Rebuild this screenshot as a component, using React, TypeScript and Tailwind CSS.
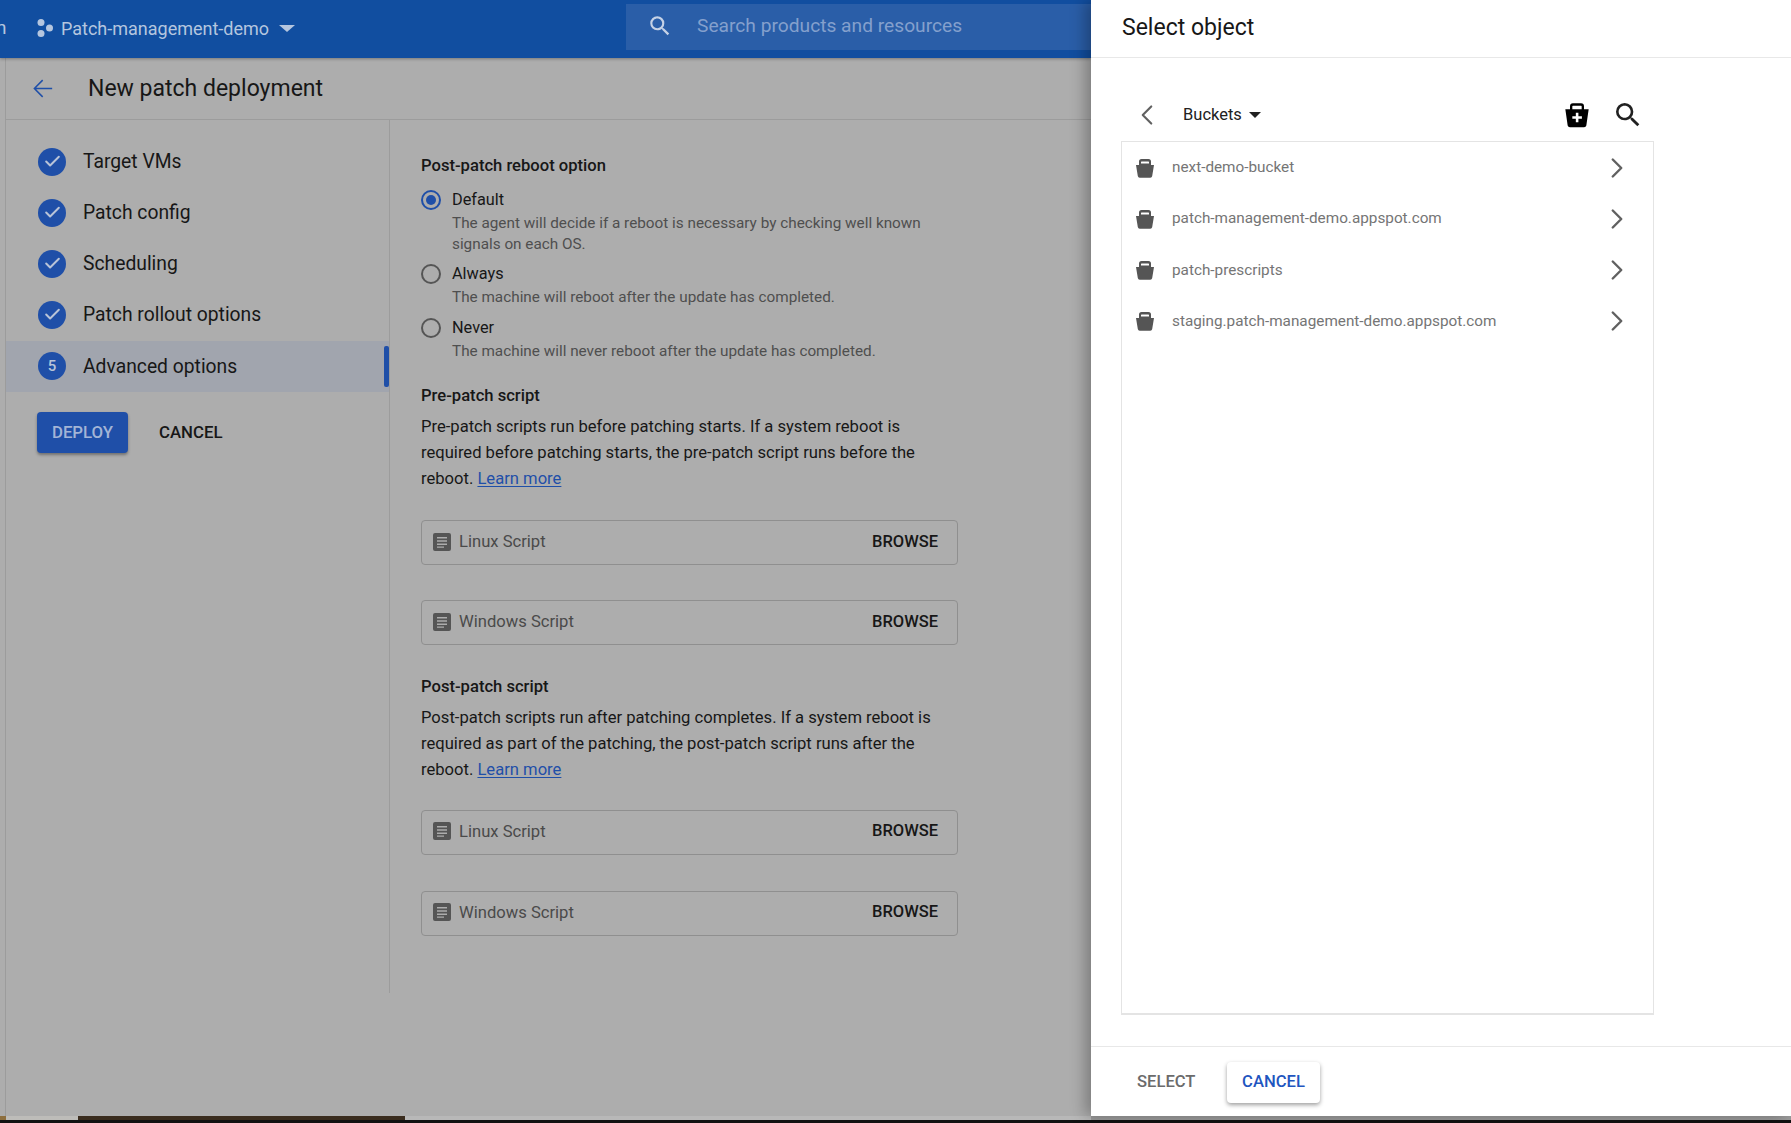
import { Check, ChevronLeft, ChevronRight } from "lucide-react";

const steps = ["Target VMs", "Patch config", "Scheduling", "Patch rollout options"];
const buckets = [
  "next-demo-bucket",
  "patch-management-demo.appspot.com",
  "patch-prescripts",
  "staging.patch-management-demo.appspot.com",
];

const SearchIcon = ({ className }: { className?: string }) => (
  <svg viewBox="0 0 24 24" className={className} fill="currentColor">
    <path d="M15.500 14h-.79l-.28-.27A6.471 6.471 0 0 0 16 9.500 6.500 6.500 0 1 0 9.500 16c1.610 0 3.090-.59 4.230-1.570l.27.28v.79l5 4.990L20.490 19l-4.990-5zm-6 0C7.010 14 5 11.990 5 9.500S7.010 5 9.500 5 14 7.010 14 9.500 11.990 14 9.500 14z" />
  </svg>
);

const BucketIcon = ({ className }: { className?: string }) => (
  <svg viewBox="0 0 24 24" className={className} fill="currentColor">
    <path fillRule="evenodd" d="M6 9V5.500A2.500 2.500 0 0 1 8.500 3h7A2.500 2.500 0 0 1 18 5.500V9h3l-1.800 11a2 2 0 0 1-2 1.700H6.800a2 2 0 0 1-2-1.700L3 9h3zm2-3v1.500h8V6a.6.6 0 0 0-.6-.6H8.600A.6.6 0 0 0 8 6z" />
  </svg>
);

const AddBucketIcon = () => (
  <svg viewBox="0 0 24 24" className="w-[28px] h-[28px] text-black" fill="currentColor">
    <path fillRule="evenodd" d="M6 7V4.500A2.500 2.500 0 0 1 8.500 2h7A2.500 2.500 0 0 1 18 4.500V7h4l-2 14a2 2 0 0 1-2 1.500H6A2 2 0 0 1 4 21L2 7h4zm2-2.500V7h8V4.500a.5.5 0 0 0-.5-.5h-7a.5.5 0 0 0-.5.5zM11 10v3H8v2.200h3v3h2.200v-3h3V13h-3v-3H11z" />
  </svg>
);

const DocIcon = () => (
  <svg viewBox="0 0 18 18" className="w-[18px] h-[18px] text-[#555555] -mt-[2px]" fill="currentColor">
    <path fillRule="evenodd" d="M2 0h14a2 2 0 0 1 2 2v14a2 2 0 0 1-2 2H2a2 2 0 0 1-2-2V2a2 2 0 0 1 2-2zm2 4v1.500h10V4H4zm0 3.200v1.500h10V7.200H4zm0 3.200v1.500h10v-1.500H4zm0 3.100v1.200h7v-1.200H4z" />
  </svg>
);

const ScriptField = ({ label }: { label: string }) => (
  <div className="h-[45px] rounded-[4px] border border-[#8f8f8f] flex items-center pl-[11px] pr-[19px]">
    <DocIcon />
    <span className="ml-[8px] text-[16.600px] text-[#4a4a4a]">{label}</span>
    <span className="ml-auto text-[16.500px] font-medium text-[#171717] -mt-[1px]">BROWSE</span>
  </div>
);

const RebootOption = ({
  label,
  selected,
  children,
}: {
  label: string;
  selected?: boolean;
  children: React.ReactNode;
}) => (
  <div className="flex">
    <div
      className={`mt-[2px] w-[20px] h-[20px] rounded-full border-2 flex items-center justify-center shrink-0 ${
        selected ? "border-[#1f4fa8]" : "border-[#555555]"
      }`}
    >
      {selected && <div className="w-[10px] h-[10px] rounded-full bg-[#1f4fa8]" />}
    </div>
    <div className="ml-[11px]">
      <div className="text-[16.300px] leading-[24px] text-[#171717]">{label}</div>
      <div className="text-[15.300px] leading-[20.500px] text-[#4f4f4f] mt-[1px]">{children}</div>
    </div>
  </div>
);

export default function App() {
  return (
    <div
      className="w-[1791px] h-[1123px] overflow-hidden flex flex-col bg-[#adadad]"
      style={{ fontFamily: "Roboto, 'Liberation Sans', sans-serif" }}
    >
      <div className="flex flex-1 min-h-0">
        {/* Page behind the scrim */}
        <div className="w-[1091px] flex flex-col shrink-0">
          {/* Top bar */}
          <div className="h-[58px] bg-[#114ea0] flex shrink-0 shadow-[0_1px_3px_rgba(0,0,0,0.3)] relative text-[#b5c6df]">
            <span className="w-[10px] text-[19px] leading-[56px] -ml-[4px] mr-[29px]">n</span>
            <div className="flex items-center w-[591px] h-[56px]">
              <svg viewBox="0 0 20 20" className="w-[20px] h-[20px]" fill="currentColor">
                <circle cx="6" cy="4.500" r="3.500" />
                <circle cx="6" cy="15.500" r="3.500" />
                <circle cx="14.500" cy="10" r="3.500" />
              </svg>
              <span className="ml-[6px] text-[18px]">Patch-management-demo</span>
              <span className="ml-[10px] w-0 h-0 border-x-[8px] border-x-transparent border-t-[7px] border-t-[#b5c6df]" />
            </div>
            <div className="w-[465px] h-[46px] mt-[4px] bg-[#2a5ea8] flex items-center pl-[21px] pb-[2px]">
              <SearchIcon className="w-[26px] h-[26px] text-[#c5d2e6]" />
              <span className="ml-[24px] text-[19.200px] text-[#84a0cd]">Search products and resources</span>
            </div>
          </div>

          <div className="flex-1 min-h-0 ml-[5px] border-l border-[#9c9c9c] flex flex-col">
            {/* Page header */}
            <div className="h-[62px] shrink-0 border-b border-[#9c9c9c] flex items-center">
              <svg viewBox="0 0 24 24" className="ml-[22px] w-[29px] h-[29px] text-[#1f4fa8]" fill="currentColor">
                <path d="M20 11.300H6.800l5.800-5.800-.9-.9L4.400 12l7.300 7.400.9-.9-5.800-5.900H20v-1.300z" />
              </svg>
              <h1 className="ml-[31px] mt-[2px] text-[23px] text-[#171717]">New patch deployment</h1>
            </div>

            <div className="flex">
              {/* Stepper */}
              <div className="w-[384px] h-[873px] border-r border-[#9c9c9c] pt-[17px] shrink-0">
                {steps.map((s) => (
                  <div key={s} className="h-[51px] flex items-center pl-[32px]">
                    <div className="w-[28px] h-[28px] -mt-[2px] rounded-full bg-[#1f4fa8] flex items-center justify-center">
                      <Check size={19} strokeWidth={2.500} className="text-[#b9c4d8]" />
                    </div>
                    <span className="ml-[17px] text-[19.300px] text-[#171717]">{s}</span>
                  </div>
                ))}
                <div className="h-[51px] flex items-center pl-[32px] bg-[#a1a5ae] relative">
                  <div className="w-[28px] h-[28px] -mt-[1px] rounded-full bg-[#1f4fa8] flex items-center justify-center text-[15px] font-medium text-[#b9c4d8]">
                    5
                  </div>
                  <span className="ml-[17px] mt-[1px] text-[19.300px] text-[#171717]">Advanced options</span>
                  <div className="absolute right-[0px] top-[5px] w-[5px] h-[41px] rounded-[2px] bg-[#1f4fa8]" />
                </div>
                <div className="flex items-center mt-[20px] pl-[31px]">
                  <button className="w-[91px] h-[41px] rounded-[4px] bg-[#1f4fa8] text-[#a3b5d6] text-[16.800px] font-medium shadow-[0_2px_3px_rgba(0,0,0,0.35)]">
                    DEPLOY
                  </button>
                  <span className="ml-[31px] text-[16.800px] font-medium text-[#171717]">CANCEL</span>
                </div>
              </div>

              {/* Form */}
              <div className="w-[537px] ml-[31px] pt-[35px] shrink-0">
                <h2 className="text-[16.600px] leading-[22px] font-medium text-[#171717]">Post-patch reboot option</h2>
                <div className="mt-[11px] flex flex-col gap-[8px]">
                  <RebootOption label="Default" selected>
                    The agent will decide if a reboot is necessary by checking well known
                    <br />
                    signals on each OS.
                  </RebootOption>
                  <RebootOption label="Always">The machine will reboot after the update has completed.</RebootOption>
                  <RebootOption label="Never">The machine will never reboot after the update has completed.</RebootOption>
                </div>

                <h2 className="mt-[24px] text-[16.600px] leading-[22px] font-medium text-[#171717]">Pre-patch script</h2>
                <p className="mt-[7px] text-[16.600px] leading-[25.800px] text-[#171717]">
                  Pre-patch scripts run before patching starts. If a system reboot is
                  <br />
                  required before patching starts, the pre-patch script runs before the
                  <br />
                  reboot. <span className="text-[#1f4fa8] underline underline-offset-2">Learn more</span>
                </p>
                <div className="mt-[29px] flex flex-col gap-[35px]">
                  <ScriptField label="Linux Script" />
                  <ScriptField label="Windows Script" />
                </div>

                <h2 className="mt-[31px] text-[16.600px] leading-[22px] font-medium text-[#171717]">Post-patch script</h2>
                <p className="mt-[7px] text-[16.600px] leading-[25.800px] text-[#171717]">
                  Post-patch scripts run after patching completes. If a system reboot is
                  <br />
                  required as part of the patching, the post-patch script runs after the
                  <br />
                  reboot. <span className="text-[#1f4fa8] underline underline-offset-2">Learn more</span>
                </p>
                <div className="mt-[27px] flex flex-col gap-[36px]">
                  <ScriptField label="Linux Script" />
                  <ScriptField label="Windows Script" />
                </div>
              </div>
            </div>
          </div>
        </div>

        {/* Select object sheet */}
        <div className="flex-1 bg-white flex flex-col shadow-[-6px_0_14px_rgba(0,0,0,0.28)] relative">
          <div className="h-[58px] shrink-0 border-b border-[#e8e8e8] flex items-center pl-[31px]">
            <h2 className="text-[23px] text-[#171717]">Select object</h2>
          </div>
          <div className="flex-1 min-h-0 pl-[30px] w-[563px] pt-[30px] pb-[31px] flex flex-col">
            <div className="h-[53px] shrink-0 flex items-center">
              <ChevronLeft size={34} strokeWidth={1.500} className="ml-[9px] text-[#616161]" />
              <span className="ml-[19px] mt-[1px] text-[16.500px] text-[#212121]">Buckets</span>
              <span className="ml-[7px] w-0 h-0 border-x-[6px] border-x-transparent border-t-[6px] border-t-[#212121]" />
              <div className="ml-auto mr-[10px] flex items-center gap-[21px]">
                <AddBucketIcon />
                <SearchIcon className="w-[32px] h-[32px] text-[#212121]" />
              </div>
            </div>
            <div className="flex-1 min-h-0 border border-[#e4e4e4] border-b-2">
              {buckets.map((b) => (
                <div key={b} className="h-[51.200px] flex items-center pl-[11px] pr-[19px]">
                  <BucketIcon className="w-[24px] h-[24px] text-[#555555]" />
                  <span className="ml-[15px] text-[15.300px] text-[#757575]">{b}</span>
                  <ChevronRight size={34} strokeWidth={1.700} className="ml-auto text-[#616161]" />
                </div>
              ))}
            </div>
          </div>
          <div className="h-[70px] shrink-0 border-t border-[#e8e8e8] flex items-center pl-[46px] pt-[1px]">
            <span className="w-[90px] text-[16.600px] font-medium text-[#6b6b6b]">SELECT</span>
            <button className="w-[93px] h-[41px] rounded-[4px] bg-white text-[16.600px] font-medium text-[#1f56c0] shadow-[0_2px_4px_rgba(0,0,0,0.38)]">
              CANCEL
            </button>
          </div>
        </div>
      </div>

      {/* Strip of the page below */}
      <div className="h-[7px] shrink-0 flex flex-col bg-[#111111]">
        <div className="h-[4px] flex bg-[#b0b0b0]">
          <div className="w-[6px] bg-[#8d6f3f]" />
          <div className="w-[72px] bg-[#bdbcb9]" />
          <div className="w-[327px] bg-[#3a2c1e]" />
          <div className="w-[686px] bg-[#b8b8b8]" />
          <div className="flex-1 bg-[#9a9a9a]" />
        </div>
      </div>
    </div>
  );
}
